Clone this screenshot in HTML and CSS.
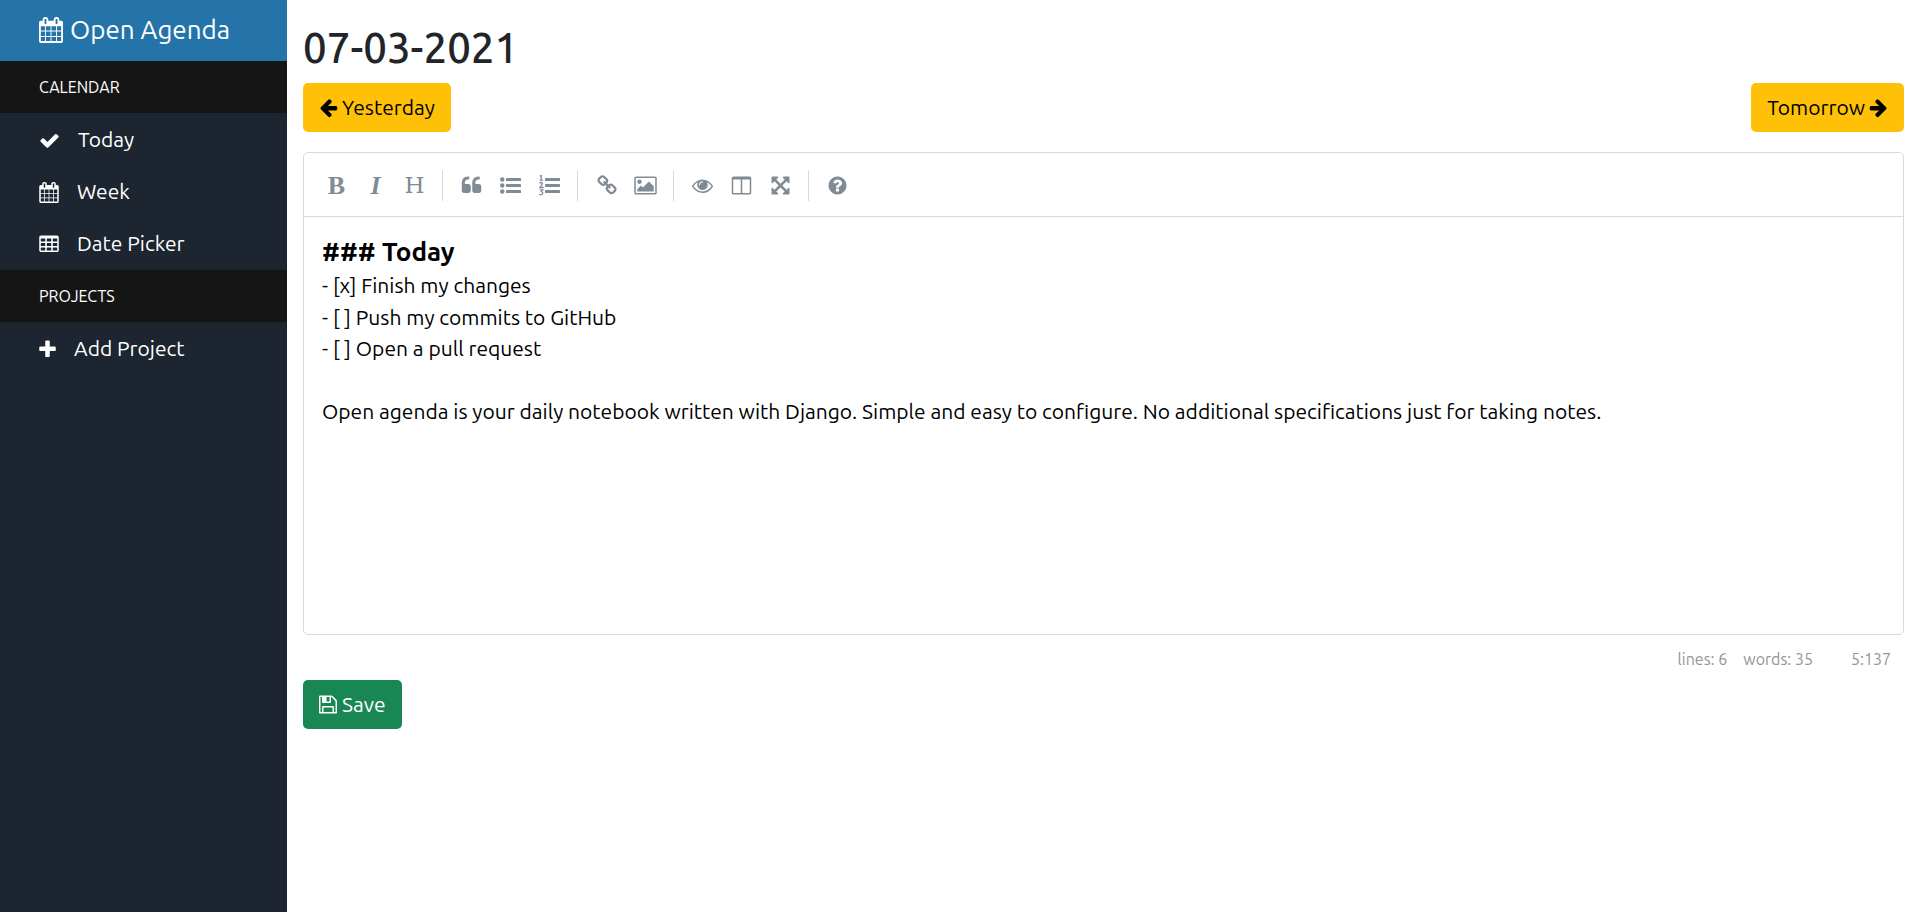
FILE: index.html
```html
<!DOCTYPE html>
<html lang="en">
<head>
<meta charset="utf-8">
<meta name="viewport" content="width=device-width, initial-scale=1">
<title>Open Agenda</title>
<link rel="stylesheet" href="styles.css">
</head>
<body>
<svg class="sprite" aria-hidden="true">
  <symbol id="calendar" viewBox="64 0 1664 1792"><path d="M192 1664h288v-288h-288v288zm352 0h320v-288h-320v288zm-352-352h288v-320h-288v320zm352 0h320v-320h-320v320zm-352-384h288v-288h-288v288zm736 736h320v-288h-320v288zm-384-736h320v-288h-320v288zm768 736h288v-288h-288v288zm-384-352h320v-320h-320v320zm-352-864v-288q0-13-9.500-22.500t-22.500-9.500h-64q-13 0-22.500 9.500t-9.500 22.500v288q0 13 9.500 22.500t22.500 9.500h64q13 0 22.500-9.500t9.500-22.500zm736 864h288v-320h-288v320zm-384-384h320v-288h-320v288zm384 0h288v-288h-288v288zm32-480v-288q0-13-9.500-22.500t-22.500-9.500h-64q-13 0-22.500 9.500t-9.500 22.500v288q0 13 9.500 22.500t22.500 9.500h64q13 0 22.500-9.500t9.500-22.500zm384-64v1280q0 52-38 90t-90 38h-1408q-52 0-90-38t-38-90v-1280q0-52 38-90t90-38h128v-96q0-66 47-113t113-47h64q66 0 113 47t47 113v96h384v-96q0-66 47-113t113-47h64q66 0 113 47t47 113v96h128q52 0 90 38t38 90z"/></symbol>
  <symbol id="check" viewBox="0 0 1792 1792"><path d="M1671 566q0 40-28 68l-724 724-136 136q-28 28-68 28t-68-28l-136-136-362-362q-28-28-28-68t28-68l136-136q28-28 68-28t68 28l294 295 656-657q28-28 68-28t68 28l136 136q28 28 28 68z"/></symbol>
  <symbol id="table" viewBox="64 0 1664 1792"><path fill-rule="evenodd" d="M224 128h1344q66 0 113 47t47 113v1088q0 66-47 113t-113 47H224q-66 0-113-47t-47-113V288q0-66 47-113t113-47zM192 416v192q0 32 32 32h320q32 0 32-32V416q0-32-32-32H224q-32 0-32 32zM704 416v192q0 32 32 32h320q32 0 32-32V416q0-32-32-32H736q-32 0-32 32zM1216 416v192q0 32 32 32h320q32 0 32-32V416q0-32-32-32h-320q-32 0-32 32zM192 800v192q0 32 32 32h320q32 0 32-32V800q0-32-32-32H224q-32 0-32 32zM704 800v192q0 32 32 32h320q32 0 32-32V800q0-32-32-32H736q-32 0-32 32zM1216 800v192q0 32 32 32h320q32 0 32-32V800q0-32-32-32h-320q-32 0-32 32zM192 1184v192q0 32 32 32h320q32 0 32-32v-192q0-32-32-32H224q-32 0-32 32zM704 1184v192q0 32 32 32h320q32 0 32-32v-192q0-32-32-32H736q-32 0-32 32zM1216 1184v192q0 32 32 32h320q32 0 32-32v-192q0-32-32-32h-320q-32 0-32 32z"/></symbol>
  <symbol id="plus" viewBox="192 0 1408 1792"><path d="M1600 736v192q0 40-28 68t-68 28h-416v416q0 40-28 68t-68 28h-192q-40 0-68-28t-28-68v-416h-416q-40 0-68-28t-28-68v-192q0-40 28-68t68-28h416v-416q0-40 28-68t68-28h192q40 0 68 28t28 68v416h416q40 0 68 28t28 68z"/></symbol>
  <symbol id="arrow-left" viewBox="64 0 1664 1792"><path d="M1664 896v128q0 53-32.500 90.500t-84.500 37.500h-704l293 294q38 36 38 90t-38 90l-75 76q-37 37-90 37-52 0-91-37l-651-652q-37-37-37-90 0-52 37-91l651-650q38-38 91-38 52 0 90 38l75 74q38 38 38 91t-38 91l-293 293h704q52 0 84.500 37.500t32.500 90.500z"/></symbol>
  <symbol id="arrow-right" viewBox="64 0 1664 1792"><path transform="translate(1792 0) scale(-1 1)" d="M1664 896v128q0 53-32.500 90.500t-84.500 37.500h-704l293 294q38 36 38 90t-38 90l-75 76q-37 37-90 37-52 0-91-37l-651-652q-37-37-37-90 0-52 37-91l651-650q38-38 91-38 52 0 90 38l75 74q38 38 38 91t-38 91l-293 293h704q52 0 84.500 37.500t32.500 90.500z"/></symbol>
  <symbol id="quote" viewBox="0 0 1792 1792"><path d="M832 960v384q0 80-56 136t-136 56h-384q-80 0-136-56t-56-136v-704q0-104 40.500-198.500t109.500-163.500 163.500-109.500 198.500-40.500h64q26 0 45 19t19 45v128q0 26-19 45t-45 19h-64q-106 0-181 75t-75 181v32q0 40 28 68t68 28h224q80 0 136 56t56 136zm896 0v384q0 80-56 136t-136 56h-384q-80 0-136-56t-56-136v-704q0-104 40.500-198.500t109.500-163.500 163.500-109.500 198.500-40.500h64q26 0 45 19t19 45v128q0 26-19 45t-45 19h-64q-106 0-181 75t-75 181v32q0 40 28 68t68 28h224q80 0 136 56t56 136z"/></symbol>
  <symbol id="list" viewBox="0 0 1792 1792"><circle cx="192" cy="384" r="192"/><circle cx="192" cy="896" r="192"/><circle cx="192" cy="1408" r="192"/><rect x="512" y="256" width="1280" height="256" rx="32"/><rect x="512" y="768" width="1280" height="256" rx="32"/><rect x="512" y="1280" width="1280" height="256" rx="32"/></symbol>
  <symbol id="numbered" viewBox="0 0 1792 1792"><rect x="512" y="256" width="1280" height="256" rx="32"/><rect x="512" y="768" width="1280" height="256" rx="32"/><rect x="512" y="1280" width="1280" height="256" rx="32"/><path fill="none" stroke="currentColor" stroke-width="105" d="M60 110L190 40V430M50 430H340M50 720Q90 630 190 630Q310 640 290 750Q260 850 60 1070H340V990M60 1270H320L190 1420Q330 1430 320 1560Q300 1690 180 1690Q90 1690 40 1630"/></symbol>
  <symbol id="link" viewBox="64 0 1664 1792"><path d="M1520 1216q0-40-28-68l-208-208q-28-28-68-28-42 0-72 32 3 3 19 18.500t21.500 21.500 15 19 13 25.500 3.500 27.500q0 40-28 68t-68 28q-15 0-27.500-3.500t-25.500-13-19-15-21.500-21.500-18.500-19q-33 31-33 73 0 40 28 68l206 207q27 27 68 27 40 0 68-26l147-146q28-28 28-67zm-703-705q0-40-28-68l-206-207q-28-28-68-28-39 0-68 27l-147 146q-28 28-28 67 0 40 28 68l208 208q27 27 68 27 42 0 72-31-3-3-19-18.500t-21.500-21.500-15-19-13-25.500-3.500-27.500q0-40 28-68t68-28q15 0 27.500 3.500t25.500 13 19 15 21.500 21.500 18.500 19q33-31 33-73zm895 705q0 120-85 203l-147 146q-83 83-203 83-121 0-204-85l-206-207q-83-83-83-203 0-123 88-209l-88-88q-86 88-208 88-120 0-204-84l-208-208q-84-84-84-204t85-203l147-146q83-83 203-83 121 0 204 85l206 207q83 83 83 203 0 123-88 209l88 88q86-88 208-88 120 0 204 84l208 208q84 84 84 204z"/></symbol>
  <symbol id="image" viewBox="-64 0 1920 1792"><path d="M576 576q0 80-56 136t-136 56-136-56-56-136 56-136 136-56 136 56 56 136zm1024 384v448h-1408v-192l320-320 160 160 512-512zm96-704h-1600q-13 0-22.500 9.500t-9.500 22.500v1216q0 13 9.500 22.500t22.500 9.500h1600q13 0 22.500-9.500t9.500-22.500v-1216q0-13-9.500-22.500t-22.500-9.500zm160 32v1216q0 66-47 113t-113 47h-1600q-66 0-113-47t-47-113v-1216q0-66 47-113t113-47h1600q66 0 113 47t47 113z"/></symbol>
  <symbol id="eye" viewBox="0 0 1792 1792"><path d="M1664 960q-152-236-381-353 61 104 61 225 0 185-131.500 316.500t-316.500 131.500-316.500-131.500-131.500-316.500q0-121 61-225-229 117-381 353 133 205 333.500 326.500t434.500 121.500 434.500-121.500 333.500-326.500zm-720-384q0-20-14-34t-34-14q-125 0-214.500 89.500t-89.500 214.500q0 20 14 34t34 14 34-14 14-34q0-86 61-147t147-61q20 0 34-14t14-34zm848 384q0 34-20 69-140 230-376.500 368.500t-499.500 138.500-499.500-139-376.500-368q-20-35-20-69t20-69q140-229 376.500-368t499.500-139 499.500 139 376.500 368q20 35 20 69z"/></symbol>
  <symbol id="columns" viewBox="0 0 1792 1792"><path d="M224 1536h608v-1152h-640v1120q0 13 9.500 22.500t22.500 9.500zm1376-32v-1120h-640v1152h608q13 0 22.500-9.500t9.500-22.500zm128-1216v1216q0 66-47 113t-113 47h-1344q-66 0-113-47t-47-113v-1216q0-66 47-113t113-47h1344q66 0 113 47t47 113z"/></symbol>
  <symbol id="expand" viewBox="0 0 1792 1792"><path d="M1411 541l-355 355 355 355 144-144q29-31 70-14 39 17 39 59v448q0 26-19 45t-45 19h-448q-42 0-59-40-17-39 14-69l144-144-355-355-355 355 144 144q31 30 14 69-17 40-59 40h-448q-26 0-45-19t-19-45v-448q0-42 40-59 39-17 69 14l144 144 355-355-355-355-144 144q-19 19-45 19-12 0-24-5-40-17-40-59v-448q0-26 19-45t45-19h448q42 0 59 40 17 39-14 69l-144 144 355 355 355-355-144-144q-31-30-14-69 17-40 59-40h448q26 0 45 19t19 45v448q0 42-39 59-13 5-25 5-26 0-45-19z"/></symbol>
  <symbol id="help" viewBox="0 0 1792 1792"><path d="M1024 1376v-192q0-14-9-23t-23-9h-192q-14 0-23 9t-9 23v192q0 14 9 23t23 9h192q14 0 23-9t9-23zm256-672q0-88-55.500-163t-138.500-116-170-41q-243 0-371 213-15 24 8 42l132 100q7 6 19 6 16 0 25-12 53-68 86-92 34-24 86-24 48 0 85.500 26t37.500 59q0 38-20 61t-68 45q-63 28-115.500 86.500t-52.500 125.500v36q0 14 9 23t23 9h192q14 0 23-9t9-23q0-19 21.500-49.500t54.500-49.500q32-18 49-28.500t46-35 44.500-48 28-60.500 12.500-81zm384 192q0 209-103 385.500t-279.500 279.500-385.500 103-385.500-103-279.500-279.500-103-385.500 103-385.500 279.500-279.500 385.500-103 385.500 103 279.500 279.500 103 385.500z"/></symbol>
  <symbol id="save" viewBox="128 0 1536 1792"><path d="M512 1536h768v-384h-768v384zm896 0h128v-896q0-14-10-38.500t-20-34.500l-281-281q-10-10-34-20t-39-10v416q0 40-28 68t-68 28h-576q-40 0-68-28t-28-68v-416h-128v1280h128v-416q0-40 28-68t68-28h832q40 0 68 28t28 68v416zm-384-928v-320q0-13-9.500-22.500t-22.500-9.500h-192q-13 0-22.500 9.500t-9.500 22.500v320q0 13 9.500 22.500t22.500 9.500h192q13 0 22.500-9.500t9.500-22.500zm640 32v928q0 40-28 68t-68 28h-1344q-40 0-68-28t-28-68v-1344q0-40 28-68t68-28h928q40 0 88 20t76 48l280 280q28 28 48 76t20 88z"/></symbol>
</svg>

<div class="layout">
  <aside class="sidebar">
    <a class="brand" href="#"><svg class="icon icon-brand"><use href="#calendar"/></svg>Open Agenda</a>
    <nav>
      <h2 class="section">CALENDAR</h2>
      <ul class="menu">
        <li><a class="item" href="#"><svg class="icon icon-wide"><use href="#check"/></svg>Today</a></li>
        <li><a class="item" href="#"><svg class="icon icon-mid"><use href="#calendar"/></svg>Week</a></li>
        <li><a class="item" href="#"><svg class="icon icon-mid"><use href="#table"/></svg>Date Picker</a></li>
      </ul>
      <h2 class="section">PROJECTS</h2>
      <ul class="menu">
        <li><a class="item" href="#"><svg class="icon icon-small"><use href="#plus"/></svg>Add Project</a></li>
      </ul>
    </nav>
  </aside>

  <main class="content">
    <h1 class="date">07-03-2021</h1>
    <div class="pager">
      <a class="btn btn-day" href="#"><svg class="icon icon-arrow"><use href="#arrow-left"/></svg>Yesterday</a>
      <a class="btn btn-day" href="#">Tomorrow<svg class="icon icon-arrow"><use href="#arrow-right"/></svg></a>
    </div>

    <form class="note">
      <div class="editor">
        <div class="toolbar" role="toolbar" aria-label="Formatting">
          <button class="tool letter bold" type="button" title="Bold">B</button>
          <button class="tool letter italic" type="button" title="Italic">I</button>
          <button class="tool letter header" type="button" title="Heading">H</button>
          <i class="separator"></i>
          <button class="tool" type="button" aria-label="Quote"><svg class="icon icon-wide"><use href="#quote"/></svg></button>
          <button class="tool" type="button" aria-label="Generic List"><svg class="icon icon-wide"><use href="#list"/></svg></button>
          <button class="tool" type="button" aria-label="Numbered List"><svg class="icon icon-wide"><use href="#numbered"/></svg></button>
          <i class="separator"></i>
          <button class="tool" type="button" aria-label="Create Link"><svg class="icon icon-mid"><use href="#link"/></svg></button>
          <button class="tool" type="button" aria-label="Insert Image"><svg class="icon icon-image"><use href="#image"/></svg></button>
          <i class="separator"></i>
          <button class="tool" type="button" aria-label="Toggle Preview"><svg class="icon icon-wide"><use href="#eye"/></svg></button>
          <button class="tool" type="button" aria-label="Toggle Side by Side"><svg class="icon icon-wide"><use href="#columns"/></svg></button>
          <button class="tool" type="button" aria-label="Toggle Fullscreen"><svg class="icon icon-wide"><use href="#expand"/></svg></button>
          <i class="separator"></i>
          <button class="tool" type="button" aria-label="Markdown Guide"><svg class="icon icon-wide"><use href="#help"/></svg></button>
        </div>
        <div class="text" contenteditable="true" role="textbox" aria-multiline="true" aria-label="Note" spellcheck="false">
          <div class="line heading">### Today</div>
          <div class="line">- [x] Finish my changes</div>
          <div class="line">- [ ] Push my commits to GitHub</div>
          <div class="line">- [ ] Open a pull request</div>
          <div class="line"><br></div>
          <div class="line">Open agenda is your daily notebook written with Django. Simple and easy to configure. No additional specifications just for taking notes.</div>
        </div>
      </div>
      <div class="status">
        <span>lines: 6</span>
        <span>words: 35</span>
        <span class="cursor">5:137</span>
      </div>
      <button class="btn btn-save" type="submit"><svg class="icon icon-save"><use href="#save"/></svg>Save</button>
    </form>
  </main>
</div>
</body>
</html>
```
FILE: styles.css
```css
* { box-sizing: border-box; }

body {
  margin: 0;
  background: #fff;
  color: #212529;
  font-family: Ubuntu, "Noto Sans", sans-serif;
  font-size: 21px;
  line-height: 1.5;
}

a { color: inherit; text-decoration: none; }

.sprite { display: none; }

.icon {
  flex: none;
  height: 21px;
  fill: currentColor;
}
.icon-wide { width: 21px; }
.icon-mid { width: 20px; }
.icon-arrow { width: 19px; }
.icon-save { width: 18px; }
.icon-small { width: 17px; }
.icon-image { width: 23px; }
.icon-brand { width: 24px; height: 26px; }

.layout {
  display: flex;
  min-height: 100vh;
}

.sidebar {
  flex: none;
  width: 287px;
  background: #1c2530;
  color: #fff;
}

.brand {
  display: flex;
  align-items: center;
  gap: 7px;
  height: 61px;
  padding: 0 39px 2px;
  background: #2574a9;
  font-size: 26px;
}

.section {
  margin: 0;
  padding: 1px 39px 0;
  background: #151515;
  font-size: 16px;
  font-weight: 400;
  line-height: 51px;
}

.menu {
  margin: 0;
  padding: 1px 0 0;
  list-style: none;
}

.item {
  display: flex;
  align-items: center;
  gap: 18px;
  height: 52px;
  padding: 0 39px;
}

.content {
  flex: 1;
  min-width: 0;
  padding: 23px 16px;
}

.date {
  margin: 0 0 11px;
  font-size: 42px;
  font-weight: 500;
  line-height: 49px;
}

.pager {
  display: flex;
  justify-content: space-between;
  margin-bottom: 20px;
}

.btn {
  display: inline-flex;
  align-items: center;
  gap: 4px;
  height: 49px;
  padding: 0 16px;
  border: 0;
  border-radius: 5px;
  font: inherit;
  cursor: pointer;
}
.btn-day { background: #ffc107; color: #000; }
.btn-save { gap: 5px; background: #198754; color: #fff; }

.editor {
  border: 1px solid #d9d9d9;
  border-radius: 5px;
}

.toolbar {
  display: flex;
  align-items: center;
  height: 64px;
  padding: 2px 13px 0;
  border-bottom: 1px solid #d9d9d9;
}

.tool {
  display: flex;
  align-items: center;
  justify-content: center;
  width: 39px;
  height: 39px;
  padding: 0;
  border: 0;
  background: none;
  color: #818b96;
  cursor: pointer;
}
.letter {
  font-family: "Liberation Serif", serif;
  font-size: 26px;
  line-height: 39px;
}
.bold { font-weight: 700; }
.italic { font-style: italic; font-weight: 700; }
.header { font-family: "DejaVu Serif", serif; font-size: 23px; }

.separator {
  width: 1px;
  height: 31px;
  margin: 0 9px 0 8px;
  background: #d9d9d9;
}

.text {
  min-height: 417px;
  padding: 17px 18px;
  color: #000;
  outline: 0;
}
.heading {
  font-size: 26px;
  font-weight: 700;
  line-height: 36px;
}

.status {
  display: flex;
  justify-content: flex-end;
  gap: 16px;
  padding: 12px 13px 9px;
  color: #959694;
  font-size: 16px;
  line-height: 24px;
}
.cursor { min-width: 62px; text-align: right; }
```
